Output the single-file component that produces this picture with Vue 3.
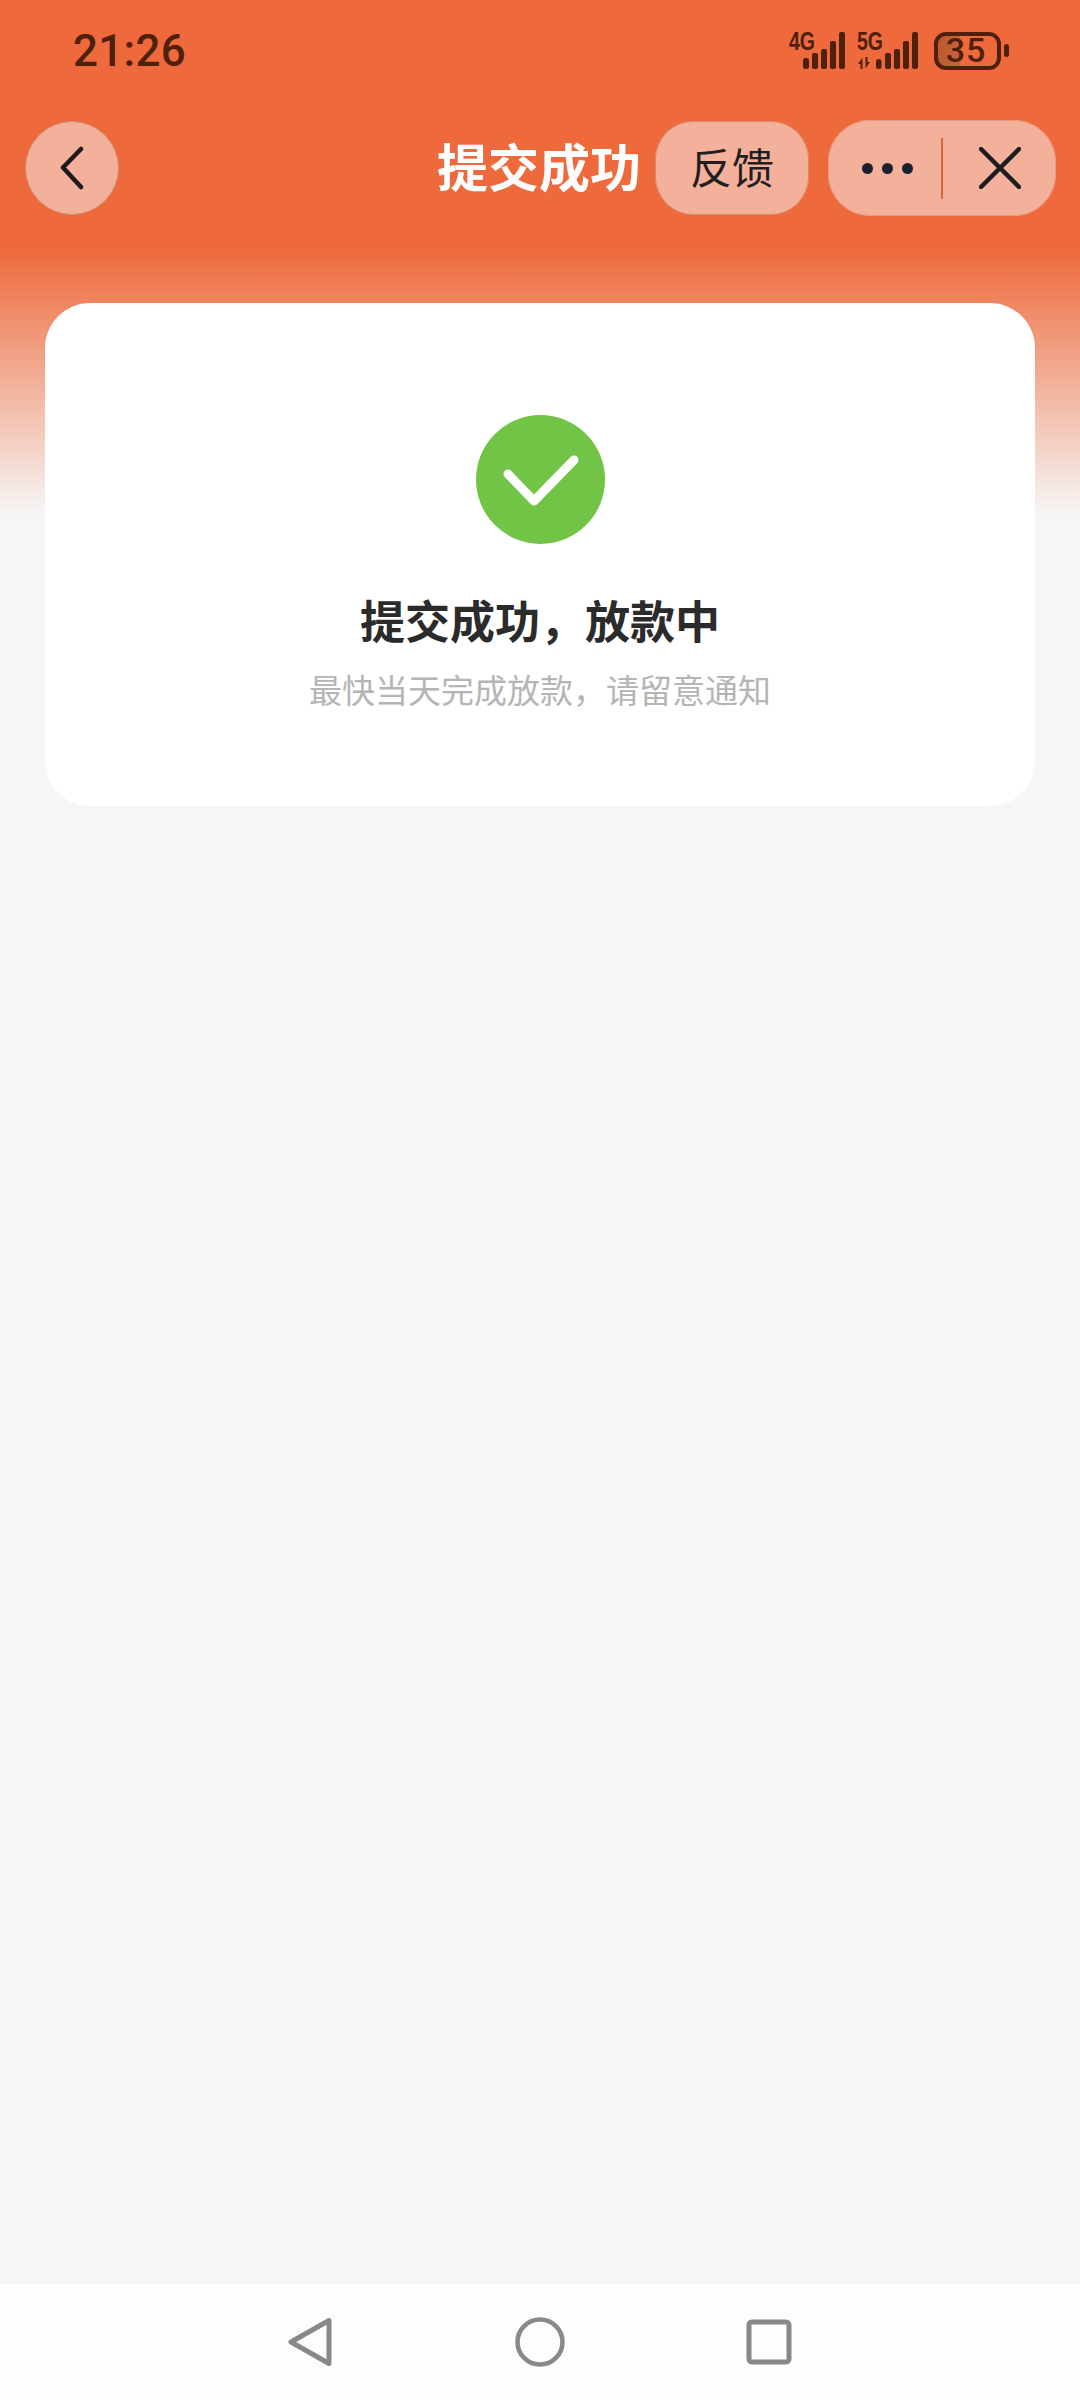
<script setup>
const sub = '最快当天完成放款\uFF0C请留意通知'
const headline = '提交成功\uFF0C放款中'
</script>

<template>
  <div class="screen">
    <div class="status">
      <span class="time">21:26</span>
      <svg class="signals" width="228" height="52" viewBox="783 21 228 52">
        <text x="789" y="50" class="net" textLength="26" lengthAdjust="spacingAndGlyphs">4G</text>
        <g fill="#4f210d">
          <rect x="803" y="58" width="6" height="11" rx="2.5" />
          <rect x="812" y="53" width="6" height="16" rx="2" />
          <rect x="821" y="49" width="6" height="20" rx="2" />
          <rect x="830" y="41" width="6" height="28" rx="2" />
          <rect x="839" y="32" width="6" height="37" rx="2" />
        </g>
        <text x="857" y="50" class="net" textLength="26" lengthAdjust="spacingAndGlyphs">5G</text>
        <g fill="#4f210d">
          <path d="M858 64 862.500 57.500V69H860.500V64Z" />
          <path d="M870 62 865.500 68.500V57H867.500V62Z" />
          <rect x="876" y="59" width="5.500" height="10" rx="2.500" />
          <rect x="885" y="53" width="6" height="16" rx="2" />
          <rect x="894" y="49" width="6" height="20" rx="2" />
          <rect x="903" y="41" width="6" height="28" rx="2" />
          <rect x="912" y="32" width="6" height="37" rx="2" />
        </g>
        <defs>
          <linearGradient id="batt" x1="0" x2="1" y1="0" y2="0">
            <stop offset="0" stop-color="#b9592f" />
            <stop offset="1" stop-color="#c9633a" />
          </linearGradient>
        </defs>
        <path d="M945 35h15v31h-15a9 9 0 0 1-9-9v-13a9 9 0 0 1 9-9z" fill="url(#batt)" />
        <rect x="936" y="34" width="63" height="34" rx="10" fill="none" stroke="#4f210d" stroke-width="4" />
        <rect x="1004" y="44" width="5" height="13" rx="2.500" fill="#4f210d" />
        <text x="966" y="62" class="batt-num" text-anchor="middle">35</text>
      </svg>
    </div>

    <div class="navbar">
      <button class="round">
        <svg width="24" height="44" viewBox="0 0 24 44">
          <path d="M21 3 3 21.500 21 41" fill="none" stroke="#1e1a1c" stroke-width="4.500" stroke-linecap="round" stroke-linejoin="round" />
        </svg>
      </button>
      <h1 class="title">提交成功</h1>
      <button class="feedback"><span class="feedback-label">反馈</span></button>
      <div class="capsule">
        <span class="capsule-cell dots">
          <i></i><i></i><i></i>
        </span>
        <span class="divider"></span>
        <span class="capsule-cell">
          <svg width="42" height="42" viewBox="0 0 42 42">
            <path d="M2 2 40 40M40 2 2 40" fill="none" stroke="#1c1c22" stroke-width="4.500" stroke-linecap="round" />
          </svg>
        </span>
      </div>
    </div>

    <section class="card">
      <div class="badge">
        <svg width="129" height="129" viewBox="0 0 129 129">
          <path d="M32 59 58 86 98 45" fill="none" stroke="#fff" stroke-width="9" stroke-linecap="round" stroke-linejoin="round" />
        </svg>
      </div>
      <h2 class="headline">{{ headline }}</h2>
      <p class="sub">{{ sub }}</p>
    </section>

    <nav class="sysnav">
      <svg width="46" height="52" viewBox="0 0 46 52">
        <path d="M41 4.500 3 26 41 47.500Z" fill="none" stroke="#888" stroke-width="5" stroke-linejoin="round" />
      </svg>
      <svg width="50" height="50" viewBox="0 0 50 50">
        <circle cx="25" cy="25" r="22.500" fill="none" stroke="#888" stroke-width="4.500" />
      </svg>
      <svg width="46" height="46" viewBox="0 0 46 46">
        <rect x="3" y="3" width="40" height="40" rx="3" fill="none" stroke="#888" stroke-width="5" />
      </svg>
    </nav>
  </div>
</template>

<style scoped>
.screen {
  width: 1080px;
  height: 2400px;
  display: flex;
  flex-direction: column;
  background: linear-gradient(180deg, #ee6a3c 0, #ee6a3c 250px, #f6f6f6 515px, #f6f6f6 100%);
  font-family: "Noto Sans CJK SC", "Liberation Sans", sans-serif;
  overflow: hidden;
}

.status {
  height: 120px;
  box-sizing: border-box;
  padding: 0 69px 0 73px;
  display: flex;
  justify-content: space-between;
  align-items: flex-start;
}

.time {
  margin-top: 25px;
  font: 500 44px/52px Roboto, sans-serif;
  color: #4f210d;
  letter-spacing: 0.3px;
}

.signals {
  margin-top: 21px;
}

.net {
  font: 700 25px "Liberation Sans", sans-serif;
  fill: #4f210d;
}

.batt-num {
  font: 500 34px Roboto, sans-serif;
  fill: #4f210d;
  letter-spacing: 1px;
}

.navbar {
  height: 96px;
  box-sizing: border-box;
  padding: 0 24px 0 25px;
  display: flex;
  align-items: center;
}

.round {
  width: 94px;
  height: 94px;
  padding: 0;
  border: 1px solid #cf8a70;
  border-radius: 50%;
  background: #f3b09a;
  display: flex;
  align-items: center;
  justify-content: center;
  box-sizing: border-box;
}

.title {
  margin: 0 14px 6px auto;
  font-size: 51px;
  line-height: 60px;
  font-weight: 700;
  color: #fff;
}

.feedback {
  width: 154px;
  height: 94px;
  padding: 0;
  border: 1px solid #dd8a6c;
  border-radius: 38px;
  background: #f3b09a;
  font-family: inherit;
  font-size: 42px;
  font-weight: 400;
  color: #231f20;
  box-sizing: border-box;
}

.feedback-label {
  display: block;
  margin-top: -5px;
}

.capsule {
  width: 228px;
  height: 96px;
  margin-left: 19px;
  border-radius: 42px;
  background: #f3b09a;
  box-shadow: inset 0 0 0 1px #e89a80;
  display: flex;
  align-items: center;
}

.capsule-cell {
  flex: 1;
  display: flex;
  align-items: center;
  justify-content: center;
}

.dots {
  gap: 9px;
  padding-left: 3px;
}

.dots i {
  width: 11px;
  height: 11px;
  border-radius: 50%;
  background: #1b2130;
}

.divider {
  width: 2px;
  height: 61px;
  margin-left: -3px;
  background: #d9663c;
}

.card {
  margin: 87px 45px 0;
  height: 503px;
  box-sizing: border-box;
  padding-top: 112px;
  border-radius: 45px;
  background: #fff;
  display: flex;
  flex-direction: column;
  align-items: center;
}

.badge {
  width: 129px;
  height: 129px;
  border-radius: 50%;
  background: #72c447;
  line-height: 0;
}

.headline {
  margin: 44px 0 0;
  font-size: 45px;
  line-height: 64px;
  font-weight: 700;
  color: #2b2b2b;
}

.sub {
  margin: 15px 0 0;
  font-size: 33px;
  line-height: 44px;
  color: #b5b5b5;
}

.sysnav {
  margin-top: auto;
  height: 116px;
  background: #fdfdfd;
  display: grid;
  grid-template-columns: 229px 229px 229px;
  justify-content: center;
  justify-items: center;
  align-items: center;
}
</style>
